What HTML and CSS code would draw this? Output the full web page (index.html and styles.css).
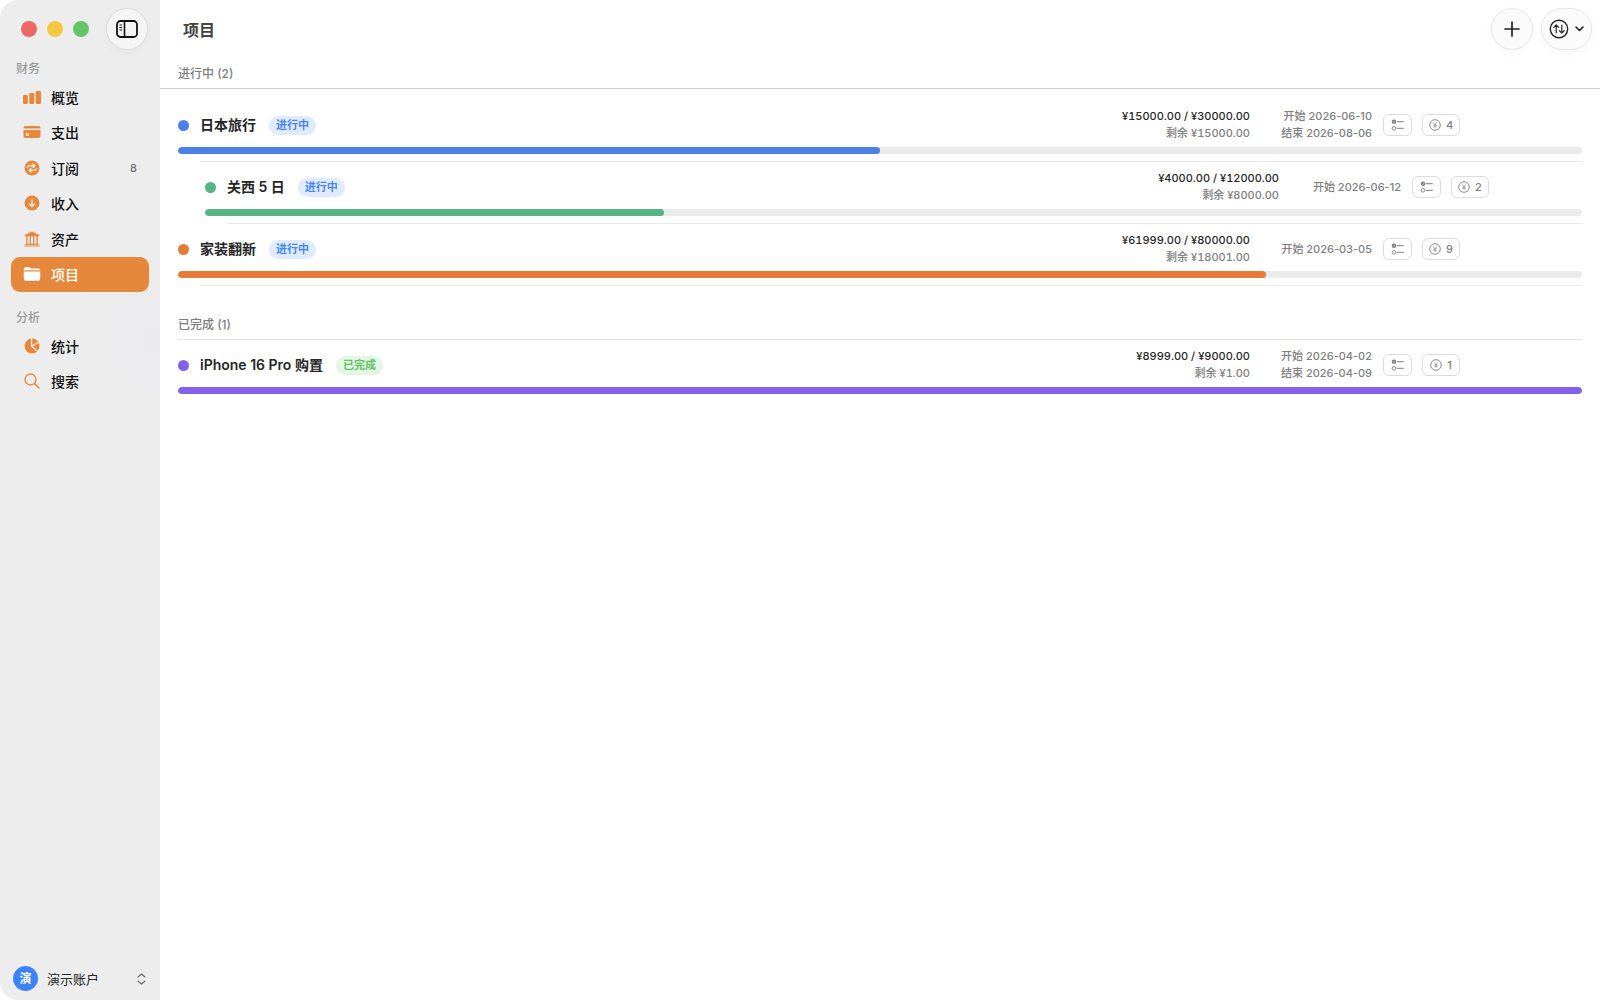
FILE: index.html
```
<!DOCTYPE html>
<html lang="zh-CN">
<head>
<meta charset="utf-8">
<title>项目</title>
<link rel="stylesheet" href="styles.css">
</head>
<body>
<svg class="sprite" aria-hidden="true">
  <symbol id="i-checklist" viewBox="0 0 13 12">
    <circle cx="3" cy="2.700" r="2.300" fill="currentColor"/>
    <path d="M2 2.800l.8.8L4.100 1.900" fill="none" stroke="#fff" stroke-width=".5"/>
    <circle cx="3" cy="9.300" r="1.800" fill="none" stroke="currentColor" stroke-width=".9"/>
    <path d="M6.200 2.700h6.200M6.200 9.300h6.200" stroke="currentColor" stroke-width="1" fill="none" stroke-linecap="round"/>
  </symbol>
  <symbol id="i-yen" viewBox="0 0 12 12">
    <circle cx="6" cy="6" r="5.3" fill="none" stroke="currentColor" stroke-width=".9"/>
    <path d="M4.300 3.500L6 6l1.700-2.500M6 6v2.700M4.700 6.100h2.600M4.700 7.300h2.600" fill="none" stroke="currentColor" stroke-width=".6" stroke-linecap="round"/>
  </symbol>
</svg>
<div class="app">
  <aside class="sidebar">
    <div class="window-bar">
      <span class="light light-red"></span>
      <span class="light light-yellow"></span>
      <span class="light light-green"></span>
      <button class="round-button" type="button" aria-label="切换边栏">
        <svg width="22" height="18" viewBox="0 0 22 18" fill="none" stroke="#111" stroke-width="1.800"><rect x="1" y="1" width="20" height="16" rx="3.500"/><path d="M8.500 1v16" stroke-width="1.600"/><path d="M3.500 5h2.600M3.500 7.500h2.600M3.500 10h2.600" stroke-width="1.100"/></svg>
      </button>
    </div>
    <nav class="nav">
      <h2 class="nav-heading">财务</h2>
      <ul class="nav-list nav-list-finance">
        <li><a class="nav-link" href="#overview"><svg class="nav-icon" viewBox="0 0 18 18"><g fill="currentColor"><rect x="0" y="7" width="4.800" height="9" rx="1.200"/><rect x="6.300" y="5" width="5" height="11" rx="1.200"/><rect x="12.700" y="3" width="5.300" height="13" rx="1.200"/></g></svg>概览</a></li>
        <li><a class="nav-link" href="#expense"><svg class="nav-icon" viewBox="0 0 18 18"><path d="M.5 5.600V5a2 2 0 0 1 2-2h13a2 2 0 0 1 2 2v.6zM.5 7.100h17V13a2 2 0 0 1-2 2h-13a2 2 0 0 1-2-2z" fill="currentColor"/><rect x="2.800" y="10.300" width="3" height="2.400" rx=".8" fill="#eee"/></svg>支出</a></li>
        <li><a class="nav-link" href="#subscription"><svg class="nav-icon" viewBox="0 0 18 18"><circle cx="9" cy="9" r="7.500" fill="currentColor"/><path d="M4.500 8.800V8.300A1.500 1.500 0 0 1 6 6.800h5.200M9.900 4.900l2 1.900-2 1.900M13.500 9.200v.5a1.500 1.500 0 0 1-1.500 1.500H6.800M8.100 9.300l-2 1.900 2 1.900" fill="none" stroke="#fff" stroke-width="1.100" stroke-linecap="round" stroke-linejoin="round"/></svg>订阅<span class="nav-count">8</span></a></li>
        <li><a class="nav-link" href="#income"><svg class="nav-icon" viewBox="0 0 18 18"><circle cx="9" cy="9" r="7.500" fill="currentColor"/><path d="M9 5.200v7.300M6.300 9.900L9 12.600l2.700-2.700" fill="none" stroke="#fff" stroke-width="1.100" stroke-linecap="round" stroke-linejoin="round"/></svg>收入</a></li>
        <li><a class="nav-link" href="#assets"><svg class="nav-icon" viewBox="0 0 18 18"><path d="M9 1.500l7.300 3.500v1.300H1.700V5zM1.200 15.400h15.600v1.200H1.200zM2.300 14h13.400v1H2.300z" fill="currentColor"/><path d="M3.900 6v8.500M7.300 6v8.500M10.700 6v8.500M14.100 6v8.500" stroke="currentColor" stroke-width="1.400"/></svg>资产</a></li>
        <li><a class="nav-link nav-link-active" href="#projects" aria-current="page"><svg class="nav-icon" viewBox="0 0 18 18"><path d="M.8 5.300V4a1.700 1.700 0 0 1 1.700-1.700h3.400c.6 0 1 .2 1.500.6l.6.5h7.500A1.700 1.700 0 0 1 17.200 5.100v.2z M.8 6.400h16.400v7.700a1.700 1.700 0 0 1-1.700 1.700h-13A1.700 1.700 0 0 1 .8 14.100z" fill="currentColor"/></svg>项目</a></li>
      </ul>
      <h2 class="nav-heading">分析</h2>
      <ul class="nav-list nav-list-analysis">
        <li><a class="nav-link" href="#stats"><svg class="nav-icon" viewBox="0 0 18 18"><circle cx="9" cy="9" r="7.500" fill="currentColor"/><path d="M8.600 1v8.300l6.200 5.200M8.900 9.100L15.500 5.200" fill="none" stroke="#eee" stroke-width="1.200"/></svg>统计</a></li>
        <li><a class="nav-link" href="#search"><svg class="nav-icon" viewBox="0 0 18 18"><circle cx="7.500" cy="7.500" r="5.500" fill="none" stroke="currentColor" stroke-width="1.300"/><path d="M11.600 11.600l4.400 4.400" stroke="currentColor" stroke-width="1.500" stroke-linecap="round"/></svg>搜索</a></li>
      </ul>
    </nav>
    <button class="account" type="button">
      <span class="avatar">演</span>
      <span class="account-name">演示账户</span>
      <svg width="9" height="12" viewBox="0 0 9 12" fill="none" stroke="#666" stroke-width="1.100" stroke-linecap="round" stroke-linejoin="round"><path d="M1 4l3.500-3L8 4M1 8l3.500 3L8 8"/></svg>
    </button>
  </aside>

  <main class="main">
    <header class="toolbar">
      <h1 class="page-title">项目</h1>
      <button class="round-button round-button-light" type="button" aria-label="新建项目">
        <svg width="16" height="16" viewBox="0 0 16 16" stroke="#222" stroke-width="1.700" stroke-linecap="round"><path d="M8 1v14M1 8h14"/></svg>
      </button>
      <button class="round-button round-button-light sort-button" type="button" aria-label="排序">
        <svg width="20" height="20" viewBox="0 0 20 20" fill="none" stroke="#222" stroke-width="1.200" stroke-linecap="round" stroke-linejoin="round"><circle cx="10" cy="10" r="8.700" stroke-width="1.400"/><path d="M7.200 13.800V5.900M4.700 8.300l2.500-2.500 2.500 2.500M12.800 6.200v7.900M10.300 11.700l2.500 2.500 2.500-2.500"/></svg>
        <svg width="9" height="6" viewBox="0 0 9 6" fill="none" stroke="#222" stroke-width="1.600" stroke-linecap="round" stroke-linejoin="round"><path d="M1 1l3.500 3.500L8 1"/></svg>
      </button>
    </header>

    <section>
      <h2 class="section-heading section-heading-pinned">进行中 (2)</h2>
      <ul class="projects projects-active">
        <li class="project project-blue">
          <div class="project-info">
            <span class="dot"></span>
            <span class="project-name">日本旅行</span>
            <span class="badge">进行中</span>
            <div class="figures"><div>¥15000.00 / ¥30000.00</div><div class="muted">剩余 ¥15000.00</div></div>
            <div class="dates"><div>开始 2026-06-10</div><div>结束 2026-08-06</div></div>
            <button class="chip" type="button" aria-label="任务清单"><svg width="13" height="12"><use href="#i-checklist"/></svg></button>
            <button class="chip chip-count" type="button"><svg width="12" height="12"><use href="#i-yen"/></svg>4</button>
          </div>
          <div class="track"><div class="fill" style="width:50%"></div></div>
        </li>
        <li class="project project-green project-child">
          <div class="project-info">
            <span class="dot"></span>
            <span class="project-name">关西 5 日</span>
            <span class="badge">进行中</span>
            <div class="figures"><div>¥4000.00 / ¥12000.00</div><div class="muted">剩余 ¥8000.00</div></div>
            <div class="dates"><div>开始 2026-06-12</div></div>
            <button class="chip" type="button" aria-label="任务清单"><svg width="13" height="12"><use href="#i-checklist"/></svg></button>
            <button class="chip chip-count" type="button"><svg width="12" height="12"><use href="#i-yen"/></svg>2</button>
          </div>
          <div class="track"><div class="fill" style="width:33.33%"></div></div>
        </li>
        <li class="project project-orange">
          <div class="project-info">
            <span class="dot"></span>
            <span class="project-name">家装翻新</span>
            <span class="badge">进行中</span>
            <div class="figures"><div>¥61999.00 / ¥80000.00</div><div class="muted">剩余 ¥18001.00</div></div>
            <div class="dates"><div>开始 2026-03-05</div></div>
            <button class="chip" type="button" aria-label="任务清单"><svg width="13" height="12"><use href="#i-checklist"/></svg></button>
            <button class="chip chip-count" type="button"><svg width="12" height="12"><use href="#i-yen"/></svg>9</button>
          </div>
          <div class="track"><div class="fill" style="width:77.5%"></div></div>
        </li>
      </ul>
    </section>

    <section>
      <h2 class="section-heading">已完成 (1)</h2>
      <ul class="projects projects-done">
        <li class="project project-purple">
          <div class="project-info">
            <span class="dot"></span>
            <span class="project-name">iPhone 16 Pro 购置</span>
            <span class="badge badge-done">已完成</span>
            <div class="figures"><div>¥8999.00 / ¥9000.00</div><div class="muted">剩余 ¥1.00</div></div>
            <div class="dates"><div>开始 2026-04-02</div><div>结束 2026-04-09</div></div>
            <button class="chip" type="button" aria-label="任务清单"><svg width="13" height="12"><use href="#i-checklist"/></svg></button>
            <button class="chip chip-count" type="button"><svg width="12" height="12"><use href="#i-yen"/></svg>1</button>
          </div>
          <div class="track"><div class="fill" style="width:99.99%"></div></div>
        </li>
      </ul>
    </section>
  </main>
</div>
</body>
</html>
```
FILE: styles.css
```
* {
  box-sizing: border-box;
}

body {
  margin: 0;
  background: #fff;
  color: #262626;
  font-family: Inter, "Noto Sans CJK SC", sans-serif;
  font-size: 14px;
}

h1,
h2,
ul {
  margin: 0;
  padding: 0;
  font-weight: 500;
  list-style: none;
}

button {
  padding: 0;
  border: 0;
  background: none;
  color: inherit;
  font: inherit;
}

svg {
  flex: none;
  display: block;
}

.sprite {
  position: absolute;
  width: 0;
  height: 0;
}

.app {
  display: flex;
  min-height: 100vh;
}

/* Sidebar */

.sidebar {
  display: flex;
  flex: none;
  flex-direction: column;
  width: 160px;
  border-radius: 18px 0 0 18px;
  background: radial-gradient(circle at 160px 340px, #ebebed, #ededed 160px);
}

.window-bar {
  display: flex;
  align-items: center;
  gap: 10px;
  height: 58px;
  padding: 0 12px 0 21px;
}

.light {
  width: 16px;
  height: 16px;
  border-radius: 50%;
}

.light-red {
  background: #ed6765;
}

.light-yellow {
  background: #f3c944;
}

.light-green {
  background: #64c466;
}

.round-button {
  display: flex;
  align-items: center;
  justify-content: center;
  width: 42px;
  height: 42px;
  border: 1px solid #dcdcdc;
  border-radius: 21px;
  background: #f5f5f5;
  box-shadow: 0 3px 10px rgba(0, 0, 0, 0.03);
}

.window-bar .round-button {
  margin-left: auto;
}

.round-button-light {
  border-color: #e6e6e6;
  background: #fbfbfb;
}

.nav-heading {
  padding-left: 16px;
  color: #9b9b9b;
  font-size: 12px;
  line-height: 21px;
}

.nav-list {
  display: grid;
  grid-auto-rows: 1fr;
  padding: 0 11px;
}

.nav-list-finance {
  height: 213px;
  margin-bottom: 15px;
}

.nav-list-analysis {
  height: 71px;
}

.nav-link {
  display: flex;
  align-items: center;
  gap: 10px;
  height: 100%;
  padding: 0 12px;
  border-radius: 9px;
  color: #111;
  font-weight: 500;
  text-decoration: none;
}

.nav-icon {
  width: 18px;
  height: 18px;
  color: #e6883c;
}

.nav-count {
  margin-left: auto;
  color: #6b6b6b;
  font-size: 11px;
}

.nav-link-active {
  background: #e6883c;
  color: #fff;
}

.nav-link-active .nav-icon {
  color: #fff;
}

.account {
  display: flex;
  align-items: center;
  gap: 9px;
  margin-top: auto;
  padding: 0 14px 9px 13px;
  font-size: 13px;
}

.avatar {
  width: 25px;
  height: 25px;
  border-radius: 50%;
  background: #3d83f7;
  color: #fff;
  font-size: 12px;
  font-weight: 700;
  line-height: 25px;
}

.account-name {
  margin-right: auto;
}

/* Main area */

.main {
  flex: 1;
  min-width: 0;
}

.toolbar {
  display: flex;
  align-items: center;
  gap: 8px;
  height: 58px;
  padding: 0 8px 0 23px;
}

.page-title {
  margin-right: auto;
  color: #444;
  font-size: 16px;
  font-weight: 700;
}

.sort-button {
  gap: 6px;
  width: 51px;
}

.section-heading {
  margin: 0 18px;
  padding-top: 1px;
  border-bottom: 1px solid #e3e3e3;
  color: #7d7d7d;
  font-size: 12px;
  line-height: 29px;
}

.section-heading-pinned {
  margin: 0;
  padding: 1px 18px 0;
  border-color: #d0d0d0;
}

.projects-active {
  padding: 11px 18px 23px;
}

.projects-done {
  padding: 0 18px;
}

.project {
  padding-top: 8px;
}

.project-child {
  margin-left: 27px;
}

.projects-active .project::after {
  content: "";
  display: block;
  height: 1px;
  margin: 7px 0 0 22px;
  background: #e9e9e9;
}

.project-info {
  display: flex;
  align-items: center;
  height: 34px;
  margin-bottom: 5px;
  padding-right: 122px;
}

.project-child .project-info {
  padding-right: 93px;
}

.dot {
  width: 11px;
  height: 11px;
  margin-right: 11px;
  border-radius: 50%;
  background: currentColor;
}

.project-name {
  margin-right: 13px;
  padding-bottom: 2px;
  color: #262626;
  font-weight: 600;
}

.badge {
  margin-right: auto;
  padding: 0 7px;
  border-radius: 10px;
  background: #e1ebfe;
  color: #4588f5;
  font-size: 11px;
  font-weight: 700;
  line-height: 19px;
}

.badge-done {
  background: #e4f6e6;
  color: #62c267;
}

.figures,
.dates {
  color: #262626;
  font-size: 11px;
  font-weight: 500;
  line-height: 17px;
  text-align: right;
  white-space: nowrap;
}

.figures {
  font-variant-numeric: tabular-nums;
}

.muted,
.dates {
  color: #808080;
}

.dates {
  width: 122px;
  margin-right: 11px;
}

.chip {
  display: flex;
  align-items: center;
  justify-content: center;
  gap: 5px;
  width: 29px;
  height: 22px;
  border: 1px solid #dcdcdc;
  border-radius: 6px;
  color: #7d7d7d;
  font-size: 11px;
}

.chip-count {
  width: 38px;
  margin-left: 10px;
}

.track {
  height: 7px;
  overflow: hidden;
  border-radius: 4px;
  background: #ebebeb;
}

.fill {
  height: 7px;
  border-radius: 4px;
  background: currentColor;
}

.project-blue {
  color: #4d80e6;
}

.project-green {
  color: #56b486;
}

.project-orange {
  color: #e67b37;
}

.project-purple {
  color: #8560e8;
}
```
